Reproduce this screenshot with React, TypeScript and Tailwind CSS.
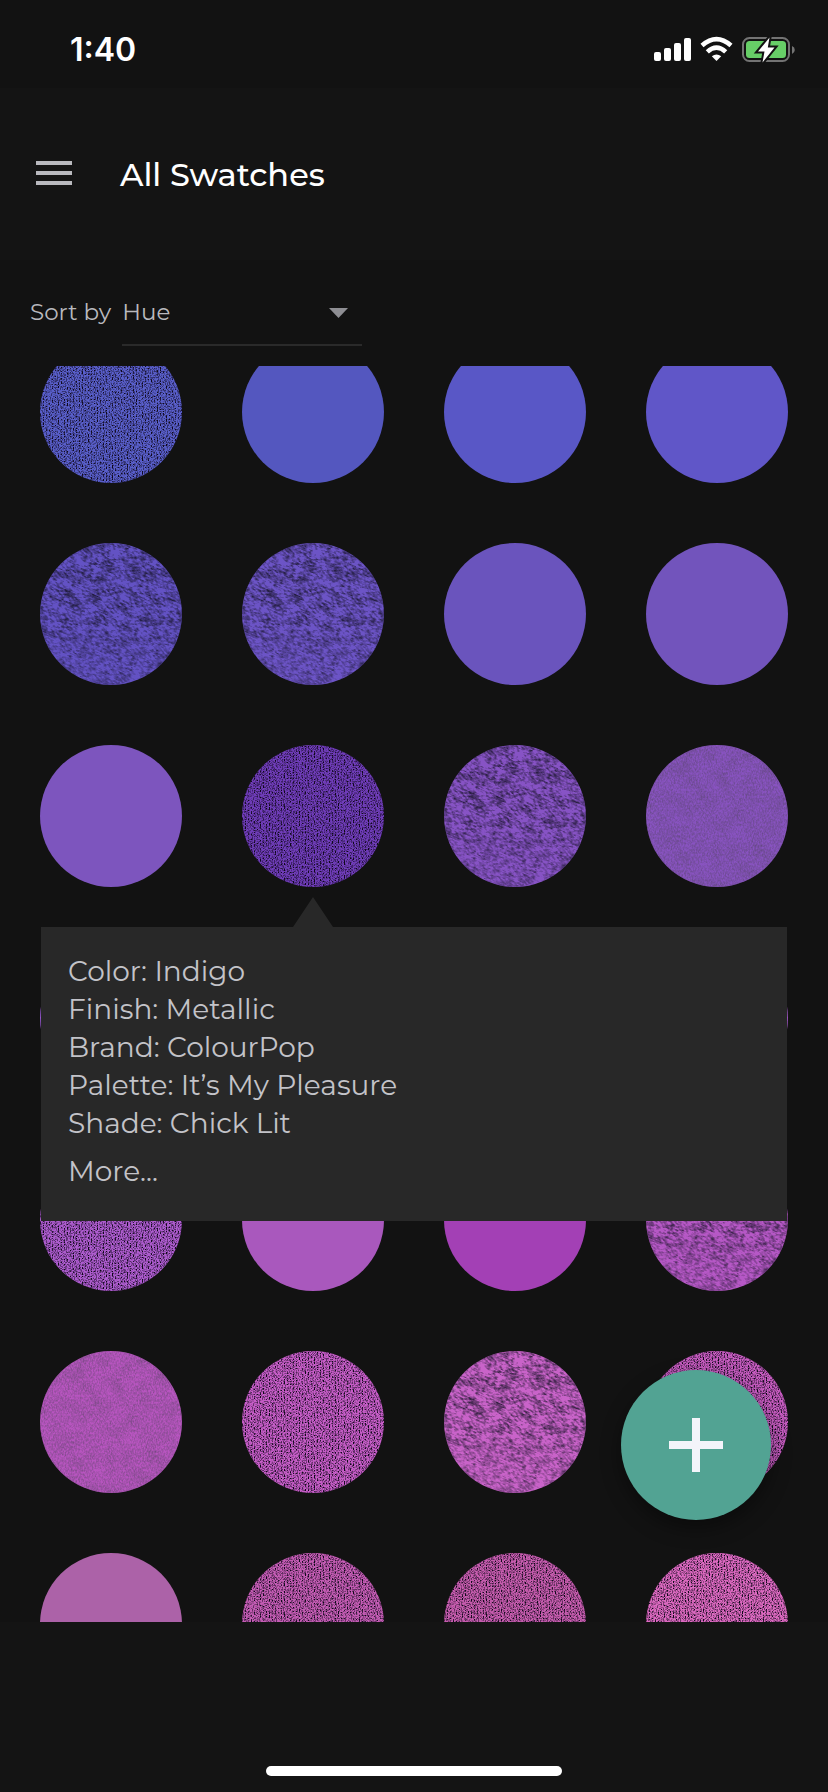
import React from "react";

type Finish = "smooth" | "matte" | "metallic" | "glitter";
type Swatch = { color: string; finish: Finish };

const rows: Swatch[][] = [
  [
    { color: "#595fcb", finish: "metallic" },
    { color: "#5457bf", finish: "smooth" },
    { color: "#5957c6", finish: "smooth" },
    { color: "#6056c8", finish: "smooth" },
  ],
  [
    { color: "#6352c4", finish: "glitter" },
    { color: "#6c54c6", finish: "glitter" },
    { color: "#6a54bd", finish: "smooth" },
    { color: "#7254bc", finish: "smooth" },
  ],
  [
    { color: "#7d55be", finish: "smooth" },
    { color: "#703dba", finish: "metallic" },
    { color: "#8753c5", finish: "glitter" },
    { color: "#8853c0", finish: "matte" },
  ],
  [
    { color: "#9155c8", finish: "smooth" },
    { color: "#9755c5", finish: "smooth" },
    { color: "#9c55c5", finish: "smooth" },
    { color: "#a055c5", finish: "matte" },
  ],
  [
    { color: "#ae5ccf", finish: "metallic" },
    { color: "#a958bd", finish: "smooth" },
    { color: "#a340b5", finish: "smooth" },
    { color: "#b658c6", finish: "glitter" },
  ],
  [
    { color: "#b855c0", finish: "matte" },
    { color: "#c65dc7", finish: "metallic" },
    { color: "#c963c9", finish: "glitter" },
    { color: "#c75cc0", finish: "metallic" },
  ],
  [
    { color: "#ac62a8", finish: "smooth" },
    { color: "#c45cb4", finish: "metallic" },
    { color: "#c65cae", finish: "metallic" },
    { color: "#dc69c0", finish: "metallic" },
  ],
];

const details: [string, string][] = [
  ["Color", "Indigo"],
  ["Finish", "Metallic"],
  ["Brand", "ColourPop"],
  ["Palette", "It’s My Pleasure"],
  ["Shade", "Chick Lit"],
];

function TextureDefs() {
  return (
    <svg className="absolute size-0" aria-hidden="true">
      <defs>
        <filter id="metallic" x="0" y="0" width="100%" height="100%" colorInterpolationFilters="sRGB">
          <feTurbulence type="fractalNoise" baseFrequency="0.87 0.69" numOctaves="3" seed="4" />
          <feColorMatrix values="0 0 0 0 0.06  0 0 0 0 0.03  0 0 0 0 0.1  4.4 0 0 0 -1.9" />
        </filter>
        <filter id="glitter" x="0" y="0" width="100%" height="100%" colorInterpolationFilters="sRGB">
          <feTurbulence type="fractalNoise" baseFrequency="0.07 0.12" numOctaves="5" seed="9" result="coarse" />
          <feTurbulence type="fractalNoise" baseFrequency="0.26 0.58" numOctaves="3" seed="21" result="fine" />
          <feComposite in="coarse" in2="fine" operator="arithmetic" k2="0.4" k3="0.7" />
          <feColorMatrix values="0 0 0 0 0.08  0 0 0 0 0.07  0 0 0 0 0.14  3.4 0 0 0 -1.42" />
        </filter>
        <filter id="matte" x="0" y="0" width="100%" height="100%" colorInterpolationFilters="sRGB">
          <feTurbulence type="fractalNoise" baseFrequency="0.06" numOctaves="5" seed="2" result="coarse" />
          <feTurbulence type="fractalNoise" baseFrequency="0.67 0.43" numOctaves="2" seed="7" result="fine" />
          <feComposite in="coarse" in2="fine" operator="arithmetic" k2="0.25" k3="0.75" />
          <feColorMatrix values="0 0 0 0 0.3  0 0 0 0 0.25  0 0 0 0 0.35  1.2 0 0 0 -0.42" />
        </filter>
        <clipPath id="disc">
          <circle cx="71" cy="71" r="71" />
        </clipPath>
        <linearGradient id="sheen" x1="0.6" y1="0" x2="0.4" y2="1">
          <stop offset="0.45" stopColor="#ccc" />
          <stop offset="1" stopColor="#888" />
        </linearGradient>
        <mask id="fade">
          <rect width="142" height="142" fill="url(#sheen)" />
        </mask>
        <pattern id="columns" width="3" height="142" patternUnits="userSpaceOnUse">
          <rect width="3" height="142" fill="#888" />
          <rect width="1" height="142" fill="#fff" />
        </pattern>
        <mask id="weave">
          <rect width="142" height="142" fill="url(#columns)" />
        </mask>
      </defs>
    </svg>
  );
}

const textureMask: Record<Finish, string | undefined> = {
  smooth: undefined,
  matte: undefined,
  metallic: "url(#weave)",
  glitter: "url(#fade)",
};

function SwatchDisc({ color, finish }: Swatch) {
  return (
    <svg viewBox="0 0 142 142" className="block size-full" aria-hidden="true">
      <circle cx="71" cy="71" r="71" fill={color} />
      {finish !== "smooth" && (
        <g clipPath="url(#disc)">
          <g mask={textureMask[finish]}>
            {finish === "glitter" ? (
              <rect x="-40" y="-40" width="222" height="222" filter="url(#glitter)" transform="rotate(24 71 71)" />
            ) : (
              <rect width="142" height="142" filter={`url(#${finish})`} />
            )}
          </g>
        </g>
      )}
    </svg>
  );
}

function StatusBar() {
  return (
    <div className="flex h-[88px] shrink-0 items-center justify-between bg-[#121212] pt-3 pr-[33px] pl-[70px] text-white">
      <span className="font-['Inter',sans-serif] text-[32px] leading-10 font-semibold">1:40</span>
      <svg width="142" height="28" viewBox="0 0 142 28" aria-hidden="true">
        <g fill="#fff">
          <rect x="1" y="16" width="7" height="9" rx="2" />
          <rect x="11" y="12" width="7" height="13" rx="2" />
          <rect x="21" y="7" width="7" height="18" rx="2" />
          <rect x="31" y="2" width="7" height="23" rx="2" />
          <path d="M63.500 25 L58.800 20.300 Q63.500 16.500 68.200 20.300Z" />
        </g>
        <g fill="none" stroke="#fff" strokeWidth="4.600">
          <path d="M49 9.500 Q63.500 -3.200 78 9.500" />
          <path d="M54.300 15.900 Q63.500 7.500 72.700 15.900" />
        </g>
        <rect x="90" y="2" width="46" height="23" rx="6.500" fill="none" stroke="#737373" strokeWidth="2" />
        <path d="M139 10v8q2.800-1.200 2.800-4t-2.800-4z" fill="#737373" />
        <rect x="93" y="5" width="40" height="17" rx="3.500" fill="#67ce67" />
        <path
          d="M116.500 1.500 L105 15.500 H111.500 L109.500 26.500 L121.500 11.500 H114.800Z"
          fill="#fff"
          stroke="#121212"
          strokeWidth="4"
          paintOrder="stroke"
        />
      </svg>
    </div>
  );
}

function DetailsPopover() {
  return (
    <div role="dialog" aria-label="Swatch details" className="absolute inset-x-[41px] top-full z-10 mt-10 bg-[#282828] px-[27px] pt-[25px] pb-[31px] text-[28px] leading-[38px] text-[#c3c3c8]">
      <svg width="40" height="30" viewBox="0 0 40 30" className="absolute bottom-full left-[252px]" aria-hidden="true">
        <path d="M20 0 40 30H0z" fill="#282828" />
      </svg>
      {details.map(([name, value]) => (
        <p key={name}>
          {name}: {value}
        </p>
      ))}
      <a href="#more" className="mt-[10px] block">
        More...
      </a>
    </div>
  );
}

export default function App() {
  return (
    <div className="flex h-screen flex-col overflow-hidden bg-[#121212] font-['Montserrat','Inter',sans-serif]">
      <TextureDefs />
      <StatusBar />
      <header className="flex h-[172px] shrink-0 items-center gap-12 bg-[#141414] px-9">
        <button type="button" aria-label="Open menu" className="flex w-9 flex-col gap-1.5 pb-0.5">
          <span className="h-1 bg-[#b9b9be]" />
          <span className="h-1 bg-[#b9b9be]" />
          <span className="h-1 bg-[#b9b9be]" />
        </button>
        <h1 className="pt-0.5 text-[32px] leading-10 font-medium text-white">All Swatches</h1>
      </header>
      <div className="flex h-[106px] shrink-0 items-start gap-[11px] px-[30px] pt-5 text-[23px] text-[#b9b9be]">
        <label htmlFor="sort" className="flex h-16 items-center">
          Sort by
        </label>
        <div className="relative w-60">
          <select id="sort" defaultValue="Hue" className="h-[66px] w-full appearance-none border-b-2 border-[#2a2a2a] bg-transparent outline-none">
            <option>Hue</option>
            <option>Brand</option>
            <option>Finish</option>
          </select>
          <svg width="19" height="10" viewBox="0 0 19 10" className="pointer-events-none absolute top-7 right-3.5" aria-hidden="true">
            <path d="M0 0h19l-9.500 10z" fill="#8e8e93" />
          </svg>
        </div>
      </div>
      <main className="relative min-h-0 flex-1">
        <div className="h-full overflow-hidden">
          <div className="-mt-[25px] flex flex-col gap-[60px]">
            {rows.map((row, r) => (
              <div key={r} className="relative">
                <div className="grid grid-cols-4 gap-[60px] px-10">
                  {row.map((swatch, c) => (
                    <button key={c} type="button" aria-label={`Swatch ${r * 4 + c + 1}`} className="aspect-square rounded-full">
                      <SwatchDisc {...swatch} />
                    </button>
                  ))}
                </div>
                {r === 2 && <DetailsPopover />}
              </div>
            ))}
          </div>
        </div>
        <button
          type="button"
          aria-label="Add swatch"
          className="absolute right-[57px] bottom-[102px] z-20 flex size-[150px] items-center justify-center rounded-full bg-[#52a393] shadow-[0_8px_20px_rgba(0,0,0,0.4)]"
        >
          <svg width="54" height="54" viewBox="0 0 54 54" aria-hidden="true">
            <path d="M23 0h8v23h23v8H31v23h-8V31H0v-8h23z" fill="#f3f4fa" />
          </svg>
        </button>
      </main>
      <footer className="flex h-[170px] shrink-0 items-end justify-center bg-[#141414] pb-4">
        <div className="h-2.5 w-[296px] rounded-full bg-white" />
      </footer>
    </div>
  );
}
